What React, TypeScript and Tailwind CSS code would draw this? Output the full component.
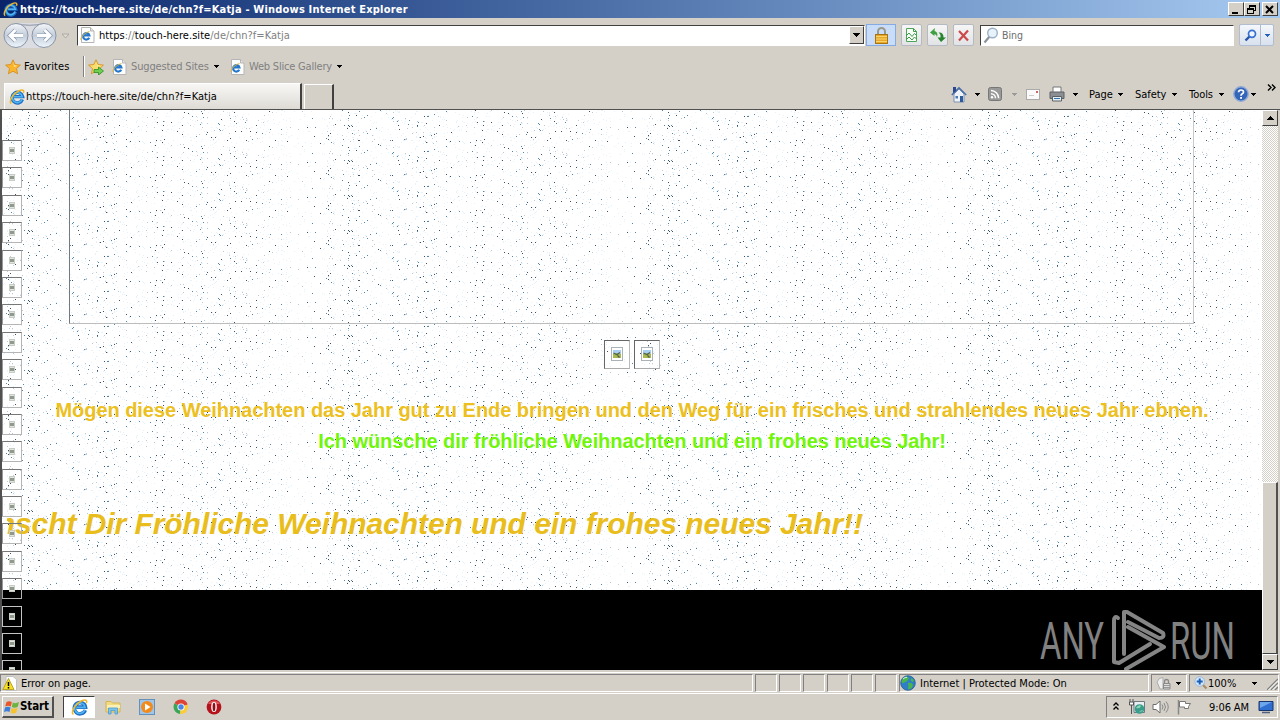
import React from "react";

const makeSpeckles = (count: number, start: number) => {
  let seed = start;
  const next = () => {
    seed = (seed * 48271) % 2147483647;
    return seed / 2147483647;
  };
  next();
  next();
  let d = "";
  for (let i = 0; i < count; i++) {
    const x = Math.floor(next() * 320);
    const y = Math.floor(next() * 35);
    // thin out one band so the repeat reads like the original tile
    if (x > 290 && next() > 0.4) continue;
    d += `M${x} ${y}h1v1h-1z`;
  }
  return d;
};

const darkDots = makeSpeckles(64, 7193);
const blueDots = makeSpeckles(58, 40277);
const greyDots = makeSpeckles(100, 97711);
const paleDots = makeSpeckles(420, 553121);

const Speckles = () => (
  <svg className="absolute top-0 left-0" width="1260" height="480" shapeRendering="crispEdges">
    <defs>
      <pattern id="speckles" width="320" height="35" patternUnits="userSpaceOnUse">
        <rect width="320" height="35" fill="#fff" />
        <path d={paleDots} fill="#e6f2fa" />
        <path d={greyDots} fill="#bfc8d2" />
        <path d={blueDots} fill="#4f86b0" />
        <path d={darkDots} fill="#3f4e60" />
      </pattern>
    </defs>
    <rect width="1260" height="480" fill="url(#speckles)" />
  </svg>
);

const IeLogo = ({ size = 16 }: { size?: number }) => (
  <svg width={size} height={size} viewBox="0 0 16 16" className="shrink-0">
    <path d="M13.4 10.4A5.3 5.3 0 1 1 13.6 7.6H5" fill="none" stroke="#1f6fc4" strokeWidth="3.4" />
    <path d="M13 10.2A5 5 0 1 1 13.2 7.8H5" fill="none" stroke="#4fb4f0" strokeWidth="1.600" />
    <path d="M2.2 14.6C-.6 12 4.500 4.200 10 1.700C13.500 .200 15.500 1.200 14.400 4" fill="none" stroke="#f0b92c" strokeWidth="1.5" />
  </svg>
);

const IePage = () => (
  <svg width="15" height="16" viewBox="0 0 15 16" className="shrink-0">
    <path d="M1.500 .500h9l3.500 3.500v11.500h-12.500z" fill="#fdfdfd" stroke="#b5b5b5" />
    <path d="M10.500 .500v3.500h3.500" fill="#e4e4e4" stroke="#b5b5b5" />
    <path d="M9.200 10.700A3.200 3.200 0 1 1 9.400 8.500H3.500" fill="none" stroke="#2577cc" strokeWidth="2.200" />
    <path d="M1 13C0 11 4 6 9.500 4.500" fill="none" stroke="#e9b93c" />
  </svg>
);

const Star = ({ add = false }: { add?: boolean }) => (
  <svg width="16" height="16" viewBox="0 0 16 16" className="shrink-0">
    <path d="M8 .8l2.200 4.700 5.200.600-3.900 3.500 1.100 5.200L8 12.200l-4.600 2.600 1.100-5.200L.6 6.100l5.200-.600z" fill={add ? "#f8dc6c" : "#fbb52d"} stroke="#d18a16" strokeWidth=".8" />
    <path d="M8 3l1.300 3.300 3 .4-3 1.300z" fill="#ffe9a0" />
    {add && <path d="M6 10.500h4.500v-2.500l5 4-5 4v-2.500H6z" fill="#6ed04e" stroke="#2c8c27" strokeWidth=".8" />}
  </svg>
);

const Caret = ({ className = "" }: { className?: string }) => (
  <svg width="5" height="3" viewBox="0 0 5 3" shapeRendering="crispEdges" className={`shrink-0 ${className}`}>
    <path d="M0 0h5v1h-1v1h-1v1h-1v-1h-1v-1h-1z" fill="currentColor" />
  </svg>
);

const WindowButton = ({ children, className = "" }: { children: React.ReactNode; className?: string }) => (
  <div className={`flex h-[14px] w-4 items-center justify-center border border-t-white border-r-[#404040] border-b-[#404040] border-l-white bg-[#d4d0c8] ${className}`}>
    <svg width="12" height="11" viewBox="0 0 12 11" shapeRendering="crispEdges">
      {children}
    </svg>
  </div>
);

const TitleBar = () => (
  <div className="flex h-[18px] items-center bg-linear-to-r from-[#0a246a] to-[#a6caf0] pr-[2px] pl-[3px]">
    <IeLogo size={15} />
    <span className="ml-[2px] text-[11px] font-bold tracking-[0.19px] text-white">
      https://touch-here.site/de/chn?f=Katja - Windows Internet Explorer
    </span>
    <div className="ml-auto flex">
      <WindowButton>
        <path d="M2 8h6v2h-6z" />
      </WindowButton>
      <WindowButton>
        <path d="M3.500 1v3M3 1.500h6.500v5M3 2.500h6M9.500 6.500h-2" fill="none" stroke="#000" />
        <path d="M1.500 4.500h6v5h-6zM1 5.500h7" fill="none" stroke="#000" />
      </WindowButton>
      <WindowButton className="ml-[2px]">
        <path d="M2 2l7 7M9 2l-7 7" stroke="#000" strokeWidth="2" shapeRendering="auto" />
      </WindowButton>
    </div>
  </div>
);

const NavCircles = () => (
  <svg width="72" height="27" viewBox="0 0 72 27" className="shrink-0">
    <defs>
      <linearGradient id="orb" x1="0" y1="0" x2="0" y2="1">
        <stop offset="0" stopColor="#f5f7fa" />
        <stop offset=".5" stopColor="#c3cdda" />
        <stop offset="1" stopColor="#eff7fc" />
      </linearGradient>
    </defs>
    <path d="M12 1H44V26H12z" fill="#dbdde3" />
    <path d="M13 1.500Q28 5 42 1.500" fill="none" stroke="#8c92a0" />
    <circle cx="14" cy="13.500" r="12" fill="url(#orb)" stroke="#8994a5" />
    <circle cx="42" cy="13.500" r="12" fill="url(#orb)" stroke="#8994a5" />
    <path d="M21 13.500H8M13.500 8l-5.500 5.500 5.500 5.500" fill="none" stroke="#8799b0" strokeWidth="4.200" />
    <path d="M21 13.500H8M13.500 8l-5.500 5.500 5.500 5.500" fill="none" stroke="#fff" strokeWidth="2.800" />
    <path d="M35 13.500H48M42.500 8l5.500 5.500-5.500 5.500" fill="none" stroke="#8799b0" strokeWidth="4.200" />
    <path d="M35 13.500H48M42.500 8l5.500 5.500-5.500 5.500" fill="none" stroke="#fff" strokeWidth="2.800" />
    <path d="M60 12h7l-3.500 4z" fill="#dedbd6" stroke="#a5a19a" strokeWidth=".8" />
  </svg>
);

const ToolButton = ({ children, className = "" }: { children: React.ReactNode; className?: string }) => (
  <div className={`flex h-[22px] w-[21px] shrink-0 items-center justify-center rounded-[2px] border border-[#b5bac2] bg-linear-to-b from-[#f6f6f6] to-[#e2e3e6] ${className}`}>
    {children}
  </div>
);

const AddressBar = () => (
  <div className="flex h-[34px] items-center pr-[6px] pl-[2px]">
    <NavCircles />
    <div className="ml-[3px] flex h-[21px] w-[788px] items-center border border-t-[#404040] border-r-white border-b-white border-l-[#404040] bg-white pl-[2px]">
      <IePage />
      <span className="ml-[4px] pt-px text-[11px] tracking-[0.04px] text-[#808080]">
        <span className="text-black">https</span>://<span className="text-black">touch-here.site</span>/de/chn?f=Katja
      </span>
      <div className="ml-auto flex h-[18px] w-[15px] items-center justify-center border border-t-white border-r-[#404040] border-b-[#404040] border-l-white bg-[#d4d0c8]">
        <svg width="7" height="4" shapeRendering="crispEdges">
          <path d="M0 0h7v1h-1v1h-1v1h-1v1h-1v-1h-1v-1h-1v-1h-1z" />
        </svg>
      </div>
    </div>
    <div className="ml-px flex h-[22px] w-[30px] items-center justify-center border border-[#86abe0] bg-[#c9dcf8]">
      <svg width="15" height="17" viewBox="0 0 15 17">
        <path d="M4 8V4.500a3.500 3.500 0 0 1 7 0V8" fill="none" stroke="#9a9a8c" strokeWidth="2" />
        <rect x="1.500" y="7.500" width="12" height="9" fill="#e8a92b" stroke="#a87410" />
        <path d="M2 9.500h11M2 12h11M2 14.500h11" stroke="#f9d46c" />
      </svg>
    </div>
    <ToolButton className="ml-[5px]">
      <svg width="13" height="16" viewBox="0 0 13 16">
        <path d="M1.500 1.500h7l3 3v10h-10z" fill="#f7fff6" stroke="#4ea557" />
        <path d="M8.500 1.500v3h3M1 9l3-3 3 3.500 2.500-3 2 2M1 13l3-3 3 3 2.500-3 2 2" fill="none" stroke="#3f9b4a" />
      </svg>
    </ToolButton>
    <ToolButton className="ml-[5px]">
      <svg width="16" height="14" viewBox="0 0 16 14">
        <path d="M5 0L0 4.500L4.500 8V6Q6.500 6.500 7 9Q8.500 4 4.500 3z" fill="#3fa040" />
        <path d="M11 14L16 9.500H13.500Q13.500 4 8.500 4.500Q11 6 10.500 9.500H7.500z" fill="#28832d" />
      </svg>
    </ToolButton>
    <ToolButton className="ml-[5px]">
      <svg width="13" height="13" viewBox="0 0 13 13">
        <path d="M2 2l9 9.500M11 1.500L2 11.500" stroke="#cc4a4a" strokeWidth="2.200" />
      </svg>
    </ToolButton>
    <div className="ml-[6px] flex h-[21px] w-[254px] items-center border border-t-[#404040] border-r-white border-b-white border-l-[#404040] bg-white pl-[2px]">
      <svg width="16" height="17" viewBox="0 0 16 17">
        <path d="M7 9L1.500 15.500" stroke="#8b939c" strokeWidth="2.200" />
        <circle cx="9.500" cy="6" r="4.800" fill="#e8f2fb" stroke="#9db0c4" strokeWidth="1.400" />
      </svg>
      <span className="ml-[3px] pt-px text-[10.500px] text-[#6d6d6d]">Bing</span>
    </div>
    <div className="ml-auto flex h-[22px] w-[35px] items-center rounded-[2px] border border-[#b0bccf] bg-linear-to-b from-[#f4f7fb] to-[#d8e1ee]">
      <div className="flex h-full w-[21px] items-center justify-center border-r border-[#b0bccf]">
        <svg width="13" height="13" viewBox="0 0 13 13">
          <path d="M5.500 7.500L1.500 11.500" stroke="#2555a5" strokeWidth="2.400" />
          <circle cx="8" cy="4.800" r="3.500" fill="#eef5ff" stroke="#3670d0" strokeWidth="1.700" />
        </svg>
      </div>
      <Caret className="ml-[4px] text-[#2461b8]" />
    </div>
  </div>
);

const FavoritesBar = () => (
  <div className="flex h-[30px] items-center pb-px pl-[5px] text-[11px]">
    <Star />
    <span className="ml-[3px] w-[59px] tracking-[0.100px]">Favorites</span>
    <div className="h-[21px] w-[2px] border-r border-l border-r-white border-l-[#808080]" />
    <div className="ml-[3px] flex">
      <Star add />
    </div>
    <div className="ml-[8px] flex">
      <IePage />
    </div>
    <span className="ml-[4px] w-[83px] tracking-[-0.150px] whitespace-nowrap text-[#808080]">Suggested Sites</span>
    <Caret />
    <div className="ml-[11px] flex">
      <IePage />
    </div>
    <span className="ml-[4px] w-[88px] tracking-[-0.200px] whitespace-nowrap text-[#808080]">Web Slice Gallery</span>
    <Caret />
  </div>
);

const CommandBar = () => (
  <div className="mb-[3px] ml-auto flex h-[24px] items-center text-[11px] tracking-[-0.04px]">
    <svg width="16" height="17" viewBox="0 0 16 17">
      <path d="M3 8v8h10V8L8 3z" fill="#eef3fa" stroke="#7d8fb0" />
      <path d="M.8 9L8 1.800 15.200 9" fill="none" stroke="#4a6fa8" strokeWidth="1.600" />
      <path d="M2 1h3v4l-3 2z" fill="#29498c" />
      <path d="M9 10h3v6H9z" fill="#2c5c9c" />
      <path d="M4.500 10h2.500v2.500H4.500z" fill="#4d79b5" />
    </svg>
    <Caret className="ml-[8px]" />
    <svg width="14" height="14" viewBox="0 0 14 14" className="ml-[8px]">
      <rect x=".5" y=".5" width="13" height="13" rx="2" fill="#999" stroke="#777" />
      <path d="M3 3.500a8 8 0 0 1 7.700 7.700M3 6.800a4.500 4.500 0 0 1 4.500 4.500" fill="none" stroke="#fff" strokeWidth="1.500" />
      <circle cx="4" cy="10.300" r="1.200" fill="#fff" />
    </svg>
    <Caret className="ml-[10px] text-[#999]" />
    <svg width="14" height="11" viewBox="0 0 14 11" className="ml-[9px]">
      <rect x=".5" y=".5" width="13" height="10" fill="#fafafa" stroke="#aaa" />
      <path d="M10 2h2v2h-2z" fill="#c66" />
      <path d="M3 6.500h5" stroke="#ccc" />
    </svg>
    <svg width="16" height="16" viewBox="0 0 16 16" className="ml-[9px]">
      <path d="M4 1h8v6H4z" fill="#fff" stroke="#777" />
      <path d="M1 6h14v6.500H1z" fill="#8b8f94" stroke="#5d6166" />
      <path d="M3.500 10.500h9V15h-9z" fill="#e4eef6" stroke="#5d6166" />
      <path d="M5 12.500h6" stroke="#3775b0" />
    </svg>
    <Caret className="ml-[8px]" />
    <span className="ml-[11px] w-[29px]">Page</span>
    <Caret />
    <span className="ml-[12px] w-[37px]">Safety</span>
    <Caret />
    <span className="ml-[12px] w-[30px]">Tools</span>
    <Caret />
    <svg width="16" height="16" viewBox="0 0 16 16" className="ml-[9px]">
      <circle cx="8" cy="8" r="7.200" fill="#3565b8" stroke="#8fa9d6" strokeWidth="1.400" />
      <path d="M5.500 6.300Q5.700 4 8 4Q10.500 4 10.500 6Q10.500 7.200 9 8Q8 8.600 8 9.800" fill="none" stroke="#fff" strokeWidth="1.700" />
      <rect x="7.100" y="11" width="1.900" height="1.800" fill="#fff" />
    </svg>
    <Caret className="ml-[2px]" />
    <svg width="9" height="7" viewBox="0 0 9 7" className="mr-[4px] mb-[13px] ml-[11px]">
      <path d="M1 .5l3 3-3 3M5 .5l3 3-3 3" fill="none" stroke="#000" strokeWidth="1.400" />
    </svg>
  </div>
);

const TabRow = () => (
  <div className="flex h-[27px] items-end pl-[4px]">
    <div className="flex h-[26px] w-[298px] items-center border-t border-r-2 border-l border-t-white border-r-[#404040] border-l-white bg-linear-to-b from-[#f8f7f5] to-[#dedbd5] pl-[4px]">
      <IeLogo size={16} />
      <span className="ml-px text-[11px] tracking-[0.04px]">https://touch-here.site/de/chn?f=Katja</span>
    </div>
    <div className="ml-[2px] h-[25px] w-[30px] border-t border-r-2 border-l border-t-white border-r-[#404040] border-l-white" />
    <CommandBar />
  </div>
);

const rail = Array.from({ length: 20 }, (_, i) => i);

const BrokenRail = () => (
  <div className="absolute top-[30px] left-0 flex flex-col gap-[6.400px]">
    {rail.map((i) => (
      <div
        key={i}
        className={
          i > 16
            ? "flex h-[21px] w-[20px] shrink-0 justify-center border border-[#c4c4c4] pt-[6px]"
            : "flex h-[21px] w-[20px] shrink-0 justify-center border border-t-[#777] border-r-[#b5b5b5] border-b-[#b5b5b5] border-l-[#999] pt-[6px]"
        }
      >
        <div className="flex h-[7px] w-[6px] items-center justify-center border border-[#c8ccc6] bg-[#e3e6df]">
          <div className="h-[3px] w-[4px] bg-[#8f998c]" />
        </div>
      </div>
    ))}
  </div>
);

const BrokenImage = () => (
  <div className="flex h-[29px] w-[26px] items-center justify-center border border-t-[#666] border-r-[#bbb] border-b-[#aaa] border-l-[#666] pb-[2px]">
    <svg width="12" height="14" viewBox="0 0 12 14">
      <rect x=".5" y=".5" width="11" height="13" fill="#fff" stroke="#aab2b8" />
      <path d="M2 3h8v4H2z" fill="#a9cff0" />
      <path d="M2 7l3-1 5 1v4H2z" fill="#a8b94a" />
      <path d="M2.500 6l3 1.500 2 1M6 7.500l3-2M6.500 8.500l2 2" fill="none" stroke="#4b5e58" strokeWidth="1.300" />
    </svg>
  </div>
);

const Watermark = () => (
  <svg className="absolute top-[496px] left-[1034px] overflow-visible" width="198" height="64" viewBox="0 0 198 64">
    <g fill="#818181" fontFamily="Roboto, 'Liberation Sans', sans-serif" fontSize="52" fontWeight="400">
      <text x="4" y="53" textLength="64" lengthAdjust="spacingAndGlyphs">ANY</text>
      <text x="134" y="53" textLength="65" lengthAdjust="spacingAndGlyphs">RUN</text>
    </g>
    <g fill="none" stroke="#858585" strokeWidth="4" strokeLinejoin="round" strokeLinecap="round">
      <path d="M82 12Q78 9 78 15V56L83 57L114 38" />
      <path d="M88 48V6L91 6L127 27Q129 32 123 32L92 16" />
      <path d="M92 21L128 41L90 63" />
    </g>
  </svg>
);

const PageView = () => (
  <div className="relative flex h-[560px] w-[1260px] flex-col overflow-hidden bg-black font-['Liberation_Sans',Arial,sans-serif] font-bold">
    <Speckles />
    <div className="relative ml-[67px] h-[214px] w-[1125px] shrink-0 border-r border-b border-l border-r-[#c8c8c8] border-b-[#bdbdbd] border-l-[#737a82]" />
    <div className="relative mt-[16px] flex justify-center gap-[4px]">
      <BrokenImage />
      <BrokenImage />
    </div>
    <p className="relative mt-[26px] text-center text-[20px] leading-[31px] tracking-[-0.035px] whitespace-nowrap text-[#ecc01f]">
      Mögen diese Weihnachten das Jahr gut zu Ende bringen und den Weg für ein frisches und strahlendes neues Jahr ebnen.
    </p>
    <p className="relative text-center text-[20px] leading-[31px] tracking-[-0.07px] whitespace-nowrap text-[#70f60c]">
      Ich wünsche dir fröhliche Weihnachten und ein frohes neues Jahr!
    </p>
    <div className="relative mt-[46px] ml-[5px] flex w-[856px] justify-end overflow-hidden text-[30px] leading-[42px] tracking-[-0.055px] whitespace-nowrap text-[#e9bd1c] italic">
      wünscht Dir Fröhliche Weihnachten und ein frohes neues Jahr!!
    </div>
    <BrokenRail />
    <Watermark />
  </div>
);

const ScrollButton = ({ up = false }: { up?: boolean }) => (
  <div className="flex h-[16px] w-[16px] shrink-0 items-center justify-center border border-t-white border-r-[#404040] border-b-[#404040] border-l-white bg-[#d4d0c8]">
    <svg width="7" height="4" shapeRendering="crispEdges">
      {up ? (
        <path d="M3 0h1v1h1v1h1v1h1v1h-7v-1h1v-1h1v-1h1z" />
      ) : (
        <path d="M0 0h7v1h-1v1h-1v1h-1v1h-1v-1h-1v-1h-1v-1h-1z" />
      )}
    </svg>
  </div>
);

const ScrollBar = () => (
  <div className="flex h-[560px] w-[16px] flex-col bg-[repeating-conic-gradient(#fff_0_25%,#d4d0c8_0_50%)] bg-size-[2px_2px]">
    <ScrollButton up />
    <div className="mt-auto h-[172px] border border-r-2 border-t-white border-r-[#505050] border-b-[#404040] border-l-white bg-[#d4d0c8]" />
    <ScrollButton />
  </div>
);

const Cell = ({ children, className = "" }: { children?: React.ReactNode; className?: string }) => (
  <div className={`flex h-[18px] shrink-0 items-center border border-t-[#808080] border-r-white border-b-white border-l-[#808080] ${className}`}>
    {children}
  </div>
);

const StatusBar = () => (
  <div className="flex h-[20px] items-center gap-[2px] text-[11px] whitespace-nowrap">
    <Cell className="w-[753px] pl-px">
      <svg width="15" height="15" viewBox="0 0 15 15">
        <path d="M4 .500h7l3.500 3V14.500H4z" fill="#fff" stroke="#c0c0c0" />
        <path d="M6.500 2.500L12 13.500H.8z" fill="#f7e024" stroke="#a99610" strokeWidth=".8" strokeLinejoin="round" />
        <path d="M6.500 6v4M6.500 11v1.500" stroke="#000" strokeWidth="1.500" />
      </svg>
      <span className="ml-[4px] tracking-[-0.050px]">Error on page.</span>
    </Cell>
    <Cell className="w-[22px]" />
    <Cell className="w-[22px]" />
    <Cell className="w-[22px]" />
    <Cell className="w-[22px]" />
    <Cell className="w-[22px]" />
    <Cell className="w-[22px]" />
    <Cell className="w-[250px]">
      <svg width="16" height="16" viewBox="0 0 16 16">
        <circle cx="8" cy="8" r="7.300" fill="#2e7fc8" stroke="#2a5a90" strokeWidth=".8" />
        <path d="M3 3Q7 0 9 3Q8 6 5 7Q3 9 1.500 7zM8 8Q12 7 13 10Q12 14 8 14.500Q9 11 8 8zM11 3l3 2-1 2-2-1z" fill="#4cb648" />
        <path d="M3 4Q5 2 7 2.500" stroke="#c9e8ff" fill="none" />
      </svg>
      <span className="ml-[4px]">Internet | Protected Mode: On</span>
    </Cell>
    <Cell className="w-[36px] pl-[4px]">
      <svg width="15" height="14" viewBox="0 0 15 14">
        <path d="M1 6Q3 1 7 1.500V13H4z" fill="#eee" stroke="#aaa" />
        <path d="M8.500 7.500V5.500a2 2 0 0 1 4 0v2" fill="none" stroke="#888" strokeWidth="1.300" />
        <path d="M7.500 7.500h6.500v5.500H7.500z" fill="#ddd" stroke="#888" />
        <path d="M8 9.500h6M8 11.500h6" stroke="#999" />
      </svg>
      <Caret className="ml-[5px]" />
    </Cell>
    <Cell className="w-[90px] pl-[4px]">
      <svg width="14" height="14" viewBox="0 0 14 14" className="shrink-0">
        <path d="M8.500 8.500l4 4" stroke="#a98d66" strokeWidth="2.200" />
        <circle cx="5.700" cy="5.500" r="4.800" fill="#d4e9fc" stroke="#9bb9d8" />
        <path d="M5.700 2.500v6M2.700 5.500h6" stroke="#1b5fb8" strokeWidth="2" />
      </svg>
      <span className="w-[44px] shrink-0">100%</span>
      <Caret />
      <svg width="11" height="13" viewBox="0 0 11 13" className="ml-auto">
        <path d="M0 13L11 2M4 13L11 6M8 13L11 10" stroke="#808080" strokeWidth="1.400" />
        <path d="M1.500 13L11 3.500M5.500 13L11 7.500" stroke="#fff" />
      </svg>
    </Cell>
  </div>
);

const TaskBar = () => (
  <div className="flex h-[27px] items-center border-t border-white pl-[2px]">
    <div className="flex h-[22px] w-[52px] items-center border border-r-2 border-b-2 border-t-white border-r-[#505050] border-b-[#505050] border-l-white pl-px">
      <svg width="16" height="16" viewBox="0 0 16 16" className="shrink-0">
        <path d="M2.500 3Q5 1.500 7.800 3L6.800 7.500Q4 6 1.200 7.500z" fill="#e8562a" />
        <path d="M8.800 3.500Q11.500 5 15 3L13.800 7.800Q10.500 9.500 7.800 8z" fill="#6db33f" />
        <path d="M1 8.500Q4 7 6.500 8.500L5.500 13Q3 11.500 0 13z" fill="#3c7edb" />
        <path d="M7.500 9Q10 10.500 13.500 8.800L12.300 13.500Q9.500 15.500 6.500 13.500z" fill="#f6c22e" />
      </svg>
      <span className="text-[11.500px] font-bold tracking-[-0.100px]">Start</span>
    </div>
    <div className="ml-[9px] flex h-[22px] w-[32px] items-center justify-center border border-t-[#404040] border-r-white border-b-white border-l-[#404040] bg-white">
      <IeLogo size={17} />
    </div>
    <svg width="16" height="16" viewBox="0 0 16 16" className="ml-[10px]">
      <path d="M1 2.500h5l1.500 1.500H15v9H1z" fill="#f3dc80" stroke="#d4b455" />
      <path d="M2 6h13v3H2z" fill="#fbf0b8" />
      <path d="M3.500 15V9h9v6h-2.500v-3.500H6V15z" fill="#7ec3ea" stroke="#4a9bcb" strokeWidth=".8" />
    </svg>
    <svg width="16" height="16" viewBox="0 0 16 16" className="ml-[18px]">
      <rect x=".5" y=".5" width="15" height="15" fill="#9fc5e8" stroke="#6490ba" />
      <circle cx="8" cy="8" r="6" fill="#f28a1c" />
      <path d="M6 4.500l5.500 3.500L6 11.500z" fill="#fff" />
    </svg>
    <svg width="16" height="16" viewBox="0 0 16 16" className="ml-[18px]">
      <path d="M8 8L1.500 4.200A7.200 7.200 0 0 1 14.700 5.500z" fill="#dd4437" />
      <path d="M8 8L1.500 4.200A7.200 7.200 0 0 0 7 15z" fill="#3aa657" />
      <path d="M8 8L14.700 5.500A7.200 7.200 0 0 1 7 15z" fill="#f8cc3c" />
      <circle cx="8" cy="8" r="3.600" fill="#fff" />
      <circle cx="8" cy="8" r="2.700" fill="#4a86e8" />
    </svg>
    <svg width="16" height="16" viewBox="0 0 16 16" className="ml-[17px]">
      <circle cx="8" cy="8" r="7.400" fill="#b5121b" />
      <path d="M2 5a7 7 0 0 1 12 0z" fill="#e0565b" />
      <ellipse cx="8" cy="8" rx="2.800" ry="5" fill="#fff" />
      <ellipse cx="8" cy="8" rx="1.400" ry="4.200" fill="#8d0e14" />
    </svg>
    <div className="mr-[2px] ml-auto flex h-[22px] w-[172px] items-center border border-t-[#808080] border-r-white border-b-white border-l-[#808080] pl-[6px]">
      <svg width="6" height="9" viewBox="0 0 6 9" className="mb-[2px]">
        <path d="M.5 3.500L3 1l2.500 2.500M.5 7.500L3 5l2.500 2.500" fill="none" stroke="#000" strokeWidth="1.300" />
      </svg>
      <svg width="16" height="16" viewBox="0 0 16 16" className="ml-[10px]">
        <path d="M5 2.500h10.500v11H5z" fill="#e9eef0" stroke="#6d7a80" />
        <path d="M1 0v3M4 0v3M.5 3h4v3h-4zM2.500 6v9" fill="#fff" stroke="#555" />
        <circle cx="10.500" cy="10" r="4.800" fill="#3a9c8c" />
        <path d="M7 9q3-4 5-2q-1 3-5 2zM10 13q3-3 4-1z" fill="#8fd9b4" />
      </svg>
      <svg width="17" height="16" viewBox="0 0 17 16" className="ml-[7px]">
        <path d="M1 5.500h3L8 2v12l-4-3.500H1z" fill="#fff" stroke="#6c6c6c" />
        <path d="M10 5.500q2 2.500 0 5M12 4q3 4 0 8M14 2.500q4.500 5.500 0 11" fill="none" stroke="#8a8a8a" />
      </svg>
      <svg width="16" height="16" viewBox="0 0 16 16" className="ml-[7px]">
        <path d="M2.500 1v14.500" stroke="#888" strokeWidth="1.500" />
        <path d="M3.500 2.500h6v2h5l-2 3 0 2H8.500v-1.500h-5z" fill="#fff" stroke="#777" />
      </svg>
      <span className="ml-[17px] w-[47px] text-[11px] tracking-[-0.100px] whitespace-nowrap">9:06 AM</span>
      <svg width="16" height="14" viewBox="0 0 16 14" className="ml-[2px] shrink-0">
        <path d="M1 1.500h14v9H1z" fill="#2e6fd0" stroke="#17356f" />
        <path d="M2 2h12L2 8z" fill="#6ea6ec" />
        <path d="M4 12.500h8" stroke="#506080" strokeWidth="1.500" />
      </svg>
    </div>
  </div>
);

const App: React.FC = () => {
  return (
    <div className="flex h-[720px] w-[1280px] flex-col overflow-hidden bg-[#d4d0c8] font-['DejaVu_Sans_Condensed','DejaVu_Sans',sans-serif] leading-none text-black">
      <TitleBar />
      <AddressBar />
      <FavoritesBar />
      <TabRow />
      <div className="flex h-[561px] shrink-0 border-t border-l-2 border-[#505050]">
        <PageView />
        <ScrollBar />
      </div>
      <div className="mt-[2px] border-t border-white">
        <StatusBar />
      </div>
      <TaskBar />
    </div>
  );
};

export default App;
